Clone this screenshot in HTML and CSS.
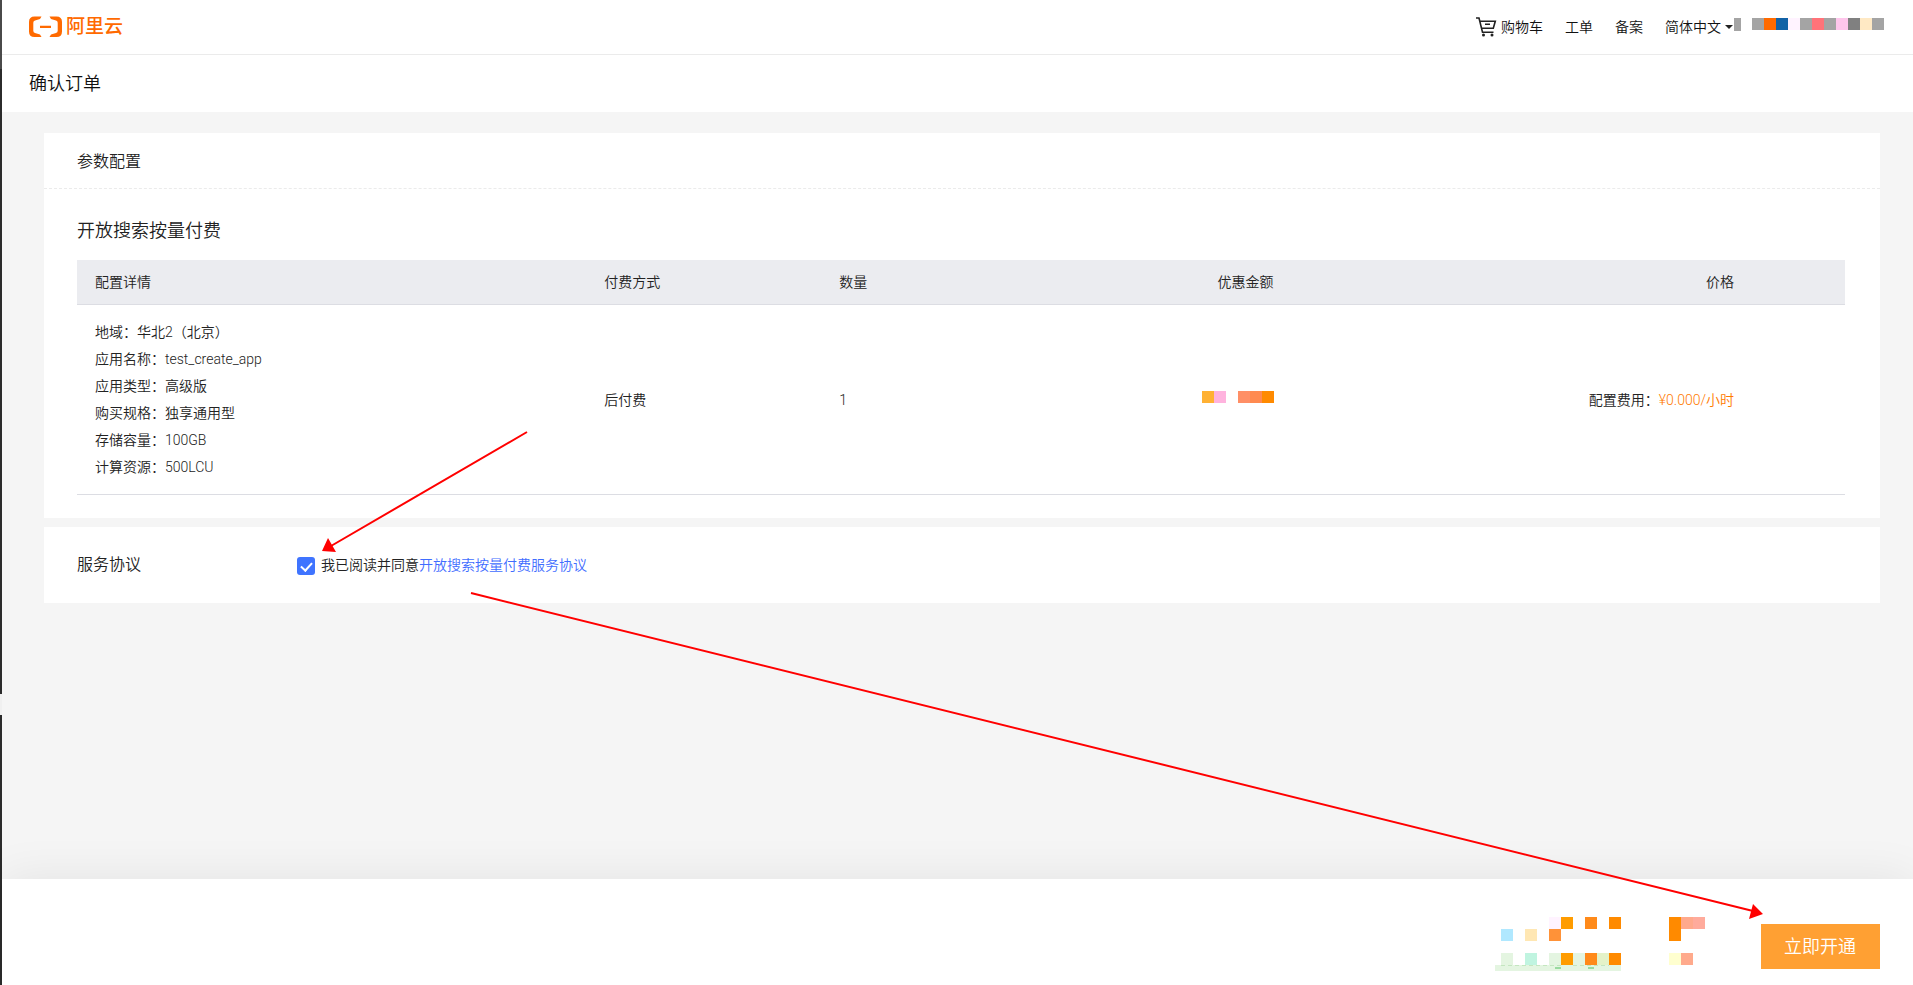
FILE: index.html
```html
<!DOCTYPE html>
<html lang="zh-CN">

<head>
    <meta charset="UTF-8">
    <meta name="viewport" content="width=device-width, initial-scale=1.0">
    <title>确认订单</title>
    <link rel="stylesheet" href="styles.css">
</head>

<body>
    <div class="edge"></div>
    <div class="page">
        <header class="topbar">
            <a href="#" class="logo">
                <svg width="33" height="22" viewBox="0 0 33 22" aria-hidden="true">
                    <path fill="#ff6a00" d="M12.5 0.5H5.5Q0 0.500 0 6V15.500Q0 21 5.500 21H12.500L11 18.500L6 17Q4.300 16.500 4.300 14.800V6.700Q4.300 5 6 4.500L11 3ZM20.500 0.500H27.500Q33 0.500 33 6V15.500Q33 21 27.500 21H20.500L22 18.500L27 17Q28.700 16.500 28.700 14.800V6.700Q28.700 5 27 4.500L22 3ZM11 9.800H22V11.900H11Z" />
                </svg>
                <span>阿里云</span>
            </a>
            <nav class="nav">
                <a href="#" class="cart">
                    <svg width="21" height="20" viewBox="0 0 21 20" fill="none" stroke="#222" stroke-width="1.6" aria-hidden="true">
                        <path d="M0 1H3L6.500 15.200H17.500M3.800 4.300H19.300L17.300 11.300H5.700M9 7.300H14" />
                        <circle cx="7.500" cy="18" r="1.500" fill="#222" stroke="none" />
                        <circle cx="16" cy="18" r="1.500" fill="#222" stroke="none" />
                    </svg>
                    <span>购物车</span>
                </a>
                <a href="#">工单</a>
                <a href="#">备案</a>
                <div class="lang">
                    <select aria-label="语言">
                        <option>简体中文</option>
                    </select>
                </div>
            </nav>
            <svg class="account" width="151" height="13" aria-hidden="true">
                <rect x="0" width="7" height="13" fill="#a4a4a4" />
                <rect x="18" width="12" height="12" fill="#a4a4a4" />
                <rect x="30" width="12" height="12" fill="#ff6a00" />
                <rect x="42" width="12" height="12" fill="#1262a6" />
                <rect x="54" width="12" height="12" fill="#fff3ff" />
                <rect x="66" width="12" height="12" fill="#a4a4a4" />
                <rect x="78" width="12" height="12" fill="#ff7379" />
                <rect x="90" width="12" height="12" fill="#a4a4a4" />
                <rect x="102" width="12" height="12" fill="#ffc6ec" />
                <rect x="114" width="12" height="12" fill="#808080" />
                <rect x="126" width="12" height="12" fill="#ffe9c4" />
                <rect x="138" width="12" height="12" fill="#a4a4a4" />
            </svg>
        </header>

        <h1 class="page-title">确认订单</h1>

        <main class="content">
            <section class="card">
                <h2 class="card-title">参数配置</h2>
                <div class="card-body">
                    <h3>开放搜索按量付费</h3>
                    <table class="order">
                        <thead>
                            <tr>
                                <th class="col-detail">配置详情</th>
                                <th class="col-pay">付费方式</th>
                                <th class="col-count">数量</th>
                                <th class="col-discount">优惠金额</th>
                                <th class="col-price">价格</th>
                            </tr>
                        </thead>
                        <tbody>
                            <tr>
                                <td>
                                    <ul class="details">
                                        <li>地域：华北2（北京）</li>
                                        <li>应用名称：test_create_app</li>
                                        <li>应用类型：高级版</li>
                                        <li>购买规格：独享通用型</li>
                                        <li>存储容量：100GB</li>
                                        <li>计算资源：500LCU</li>
                                    </ul>
                                </td>
                                <td>后付费</td>
                                <td>1</td>
                                <td class="col-discount">
                                    <svg width="72" height="14" aria-hidden="true">
                                        <rect width="12" height="12" fill="#ffb133" />
                                        <rect x="12" width="12" height="12" fill="#ffb3de" />
                                        <rect x="36" width="12" height="12" fill="#ff8f66" />
                                        <rect x="48" width="12" height="12" fill="#ff8a50" />
                                        <rect x="60" width="12" height="12" fill="#ff8a00" />
                                    </svg>
                                </td>
                                <td class="col-price">配置费用：<span class="price">¥0.000/小时</span></td>
                            </tr>
                        </tbody>
                    </table>
                </div>
            </section>

            <section class="card agreement">
                <h2>服务协议</h2>
                <div class="agree">
                    <input type="checkbox" id="agree" checked>
                    <label for="agree">我已阅读并同意<a href="#">开放搜索按量付费服务协议</a></label>
                </div>
            </section>
        </main>

        <footer class="footer">
            <svg width="210" height="54" aria-hidden="true">
                <rect x="54" width="12" height="12" fill="#fff3ff" />
                <rect x="66" width="12" height="12" fill="#ff9c00" />
                <rect x="90" width="12" height="12" fill="#ff8a1a" />
                <rect x="114" width="12" height="12" fill="#ff8a00" />
                <rect x="174" width="12" height="24" fill="#ff8a00" />
                <rect x="186" width="12" height="12" fill="#ffa98c" />
                <rect x="198" width="12" height="12" fill="#ffab9c" />
                <rect x="6" y="12" width="12" height="12" fill="#b0e8ff" />
                <rect x="30" y="12" width="12" height="12" fill="#ffe7b3" />
                <rect x="54" y="12" width="12" height="12" fill="#ff9238" />
                <rect y="48" width="126" height="6" fill="#e4f5e1" />
                <rect x="6" y="36" width="12" height="12" fill="#e4f5e1" />
                <rect x="30" y="36" width="12" height="12" fill="#c0f4e0" />
                <rect x="54" y="36" width="54" height="12" fill="#e4f5e1" />
                <rect x="66" y="36" width="12" height="12" fill="#ff9c00" />
                <rect x="90" y="36" width="12" height="12" fill="#ff8a1a" />
                <rect x="102" y="36" width="12" height="12" fill="#e4f2c8" />
                <rect x="114" y="36" width="12" height="12" fill="#ff8a00" />
                <rect x="174" y="36" width="12" height="12" fill="#ffffcf" />
                <rect x="186" y="36" width="12" height="12" fill="#ffaa8c" />
                <path d="M6 48.500H66M78 48.500H114" stroke="#c4e6c0" stroke-dasharray="4 3" />
                <path d="M60 51H66M93 51H99" stroke="#4fbf5f" />
            </svg>
            <button type="button" class="submit">立即开通</button>
        </footer>
    </div>

    <!-- guide arrows over the page -->
    <svg class="arrows" viewBox="0 0 1913 985" aria-hidden="true">
        <path d="M527 432L331 546M471 593L1753 911" fill="none" stroke="#f00" stroke-width="2" />
        <path d="M322 551L328 538L336 552ZM1763 914L1753 904L1749 919Z" fill="#f00" />
    </svg>
</body>

</html>
```
FILE: styles.css
```css
* {
    box-sizing: border-box;
}

body {
    margin: 0;
    position: relative;
    display: flex;
    min-height: 100vh;
    background-color: #f5f5f5;
    color: #222;
    font-family: Roboto, "Noto Sans CJK SC", sans-serif;
    font-size: 14px;
    font-weight: 350;
    line-height: 20px;
}

h1,
h2,
h3 {
    margin: 0;
    font-weight: 350;
}

a {
    color: inherit;
    text-decoration: none;
}

.edge {
    flex: none;
    width: 2px;
    background: linear-gradient(#4a4a4a 7%, #2b2b2b 7%, #2b2b2b 70.5%, #f0f0f0 70.5%, #f0f0f0 72.6%, #2b2b2b 72.6%);
}

.page {
    flex: 1;
    display: flex;
    flex-direction: column;
}

/* top bar */
.topbar {
    display: flex;
    align-items: center;
    height: 55px;
    padding: 0 28px 0 27px;
    background-color: #fff;
    border-bottom: 1px solid #ebebeb;
}

.logo {
    display: flex;
    align-items: center;
    gap: 4px;
    color: #ff6a00;
    font-size: 19px;
    font-weight: 500;
}

.nav {
    display: flex;
    align-items: center;
    gap: 22px;
    margin-left: auto;
    color: #111;
}

.cart {
    display: flex;
    align-items: center;
    gap: 4px;
}

.lang {
    display: flex;
    align-items: center;
    gap: 4px;
}

.lang select {
    appearance: none;
    padding: 0;
    border: 0;
    background: none;
    color: inherit;
    font: inherit;
}

.lang::after {
    content: "";
    border: 4px solid transparent;
    border-top-color: #222;
    border-bottom: 0;
}

.account {
    margin: 0 0 6px 1px;
}

.page-title {
    height: 57px;
    padding-left: 27px;
    background-color: #fff;
    color: #111;
    font-size: 18px;
    line-height: 57px;
}

/* cards */
.content {
    flex: 1;
    display: flex;
    flex-direction: column;
    gap: 9px;
    padding: 21px 33px 21px 42px;
}

.card {
    background-color: #fff;
}

.card h2 {
    font-size: 16px;
}

.card-title {
    padding: 2px 33px 0;
    line-height: 53px;
    border-bottom: 1px dashed #ebebeb;
}

.card-body {
    padding: 28px 35px 23px 33px;
}

.card-body h3 {
    margin-bottom: 16px;
    font-size: 18px;
    line-height: 27px;
}

.order {
    width: 100%;
    border-spacing: 0;
    table-layout: fixed;
    text-align: left;
}

.order th {
    height: 45px;
    padding: 0 18px;
    background-color: #ebecf0;
    border-bottom: 1px solid #dcdde3;
    font-weight: 350;
}

.order td {
    padding: 14px 18px 13px;
    border-bottom: 1px solid #dcdde3;
}

.order .col-detail {
    width: 28.8%;
}

.order .col-pay,
.order .col-count,
.order .col-discount {
    width: 13.3%;
}

.order .col-discount {
    text-align: right;
}

.order .col-price {
    padding-right: 111px;
    text-align: right;
}

.details {
    margin: 0;
    padding: 0;
    list-style: none;
    line-height: 27px;
}

.price {
    color: #ff7a00;
}

.agreement {
    display: flex;
    align-items: center;
    height: 76px;
    padding: 0 33px;
}

.agreement h2 {
    width: 220px;
}

.agree {
    display: flex;
    align-items: flex-end;
    gap: 6px;
}

.agree input {
    appearance: none;
    display: grid;
    place-items: center;
    width: 18px;
    height: 18px;
    margin: 0;
    border-radius: 3px;
    background-color: #3f74ff;
}

.agree input:checked::after {
    content: "";
    width: 5px;
    height: 9px;
    margin-bottom: 2px;
    border: solid #fff;
    border-width: 0 2px 2px 0;
    transform: rotate(42deg);
}

.agree a {
    color: #3f6dff;
}

/* bottom bar */
.footer {
    display: flex;
    align-items: flex-start;
    justify-content: flex-end;
    gap: 56px;
    height: 106px;
    padding: 38px 33px 0;
    background-color: #fff;
    box-shadow: 0 0 48px rgba(0, 0, 0, 0.08);
}

.submit {
    height: 45px;
    margin-top: 7px;
    padding: 0 24px 0 23px;
    border: 0;
    background-color: #ffa033;
    color: #fff;
    font: inherit;
    font-size: 18px;
    cursor: pointer;
}

.arrows {
    position: absolute;
    top: 0;
    left: 0;
    width: 100%;
    pointer-events: none;
}
```
